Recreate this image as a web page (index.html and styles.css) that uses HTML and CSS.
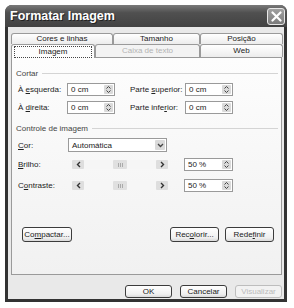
FILE: index.html
```html
<!DOCTYPE html>
<html lang="pt">
<head>
    <meta charset="UTF-8">
    <title>Formatar Imagem</title>
    <link rel="stylesheet" href="styles.css">
</head>
<body>

    <div class="window">
        <div class="titlebar">
            <span class="title">Formatar Imagem</span>
            <div class="close">
                <svg width="11" height="11" viewBox="0 0 11 11"><path d="M1.5 1.5 L9.5 9.5 M9.5 1.5 L1.5 9.5" stroke="#fff" stroke-width="2.2" stroke-linecap="round"/></svg>
            </div>
        </div>

        <div class="client">
            <div class="tabs">
                <div class="tab-row back">
                    <div class="tab w1">Cores e linhas</div>
                    <div class="tab w2">Tamanho</div>
                    <div class="tab w3">Posição</div>
                </div>
                <div class="tab-row front">
                    <div class="tab active"><span class="focus">Imagem</span></div>
                    <div class="tab w5 disabled">Caixa de texto</div>
                    <div class="tab w3">Web</div>
                </div>
            </div>

            <div class="panel">
                <div class="group">Cortar</div>

                <div class="crop-row">
                    <span class="lbl">À <u>e</u>squerda:</span>
                    <div class="spin"><span>0 cm</span><div class="spin-btn"><svg width="5" height="9" viewBox="0 0 5 9"><path d="M0.5 3.5 L2.5 1.5 L4.5 3.5 M0.5 5.5 L2.5 7.5 L4.5 5.5" stroke="#444" fill="none"/></svg></div></div>
                    <span class="lbl lbl2">Parte <u>s</u>uperior:</span>
                    <div class="spin"><span>0 cm</span><div class="spin-btn"><svg width="5" height="9" viewBox="0 0 5 9"><path d="M0.5 3.5 L2.5 1.5 L4.5 3.5 M0.5 5.5 L2.5 7.5 L4.5 5.5" stroke="#444" fill="none"/></svg></div></div>
                </div>
                <div class="crop-row">
                    <span class="lbl">À <u>d</u>ireita:</span>
                    <div class="spin"><span>0 cm</span><div class="spin-btn"><svg width="5" height="9" viewBox="0 0 5 9"><path d="M0.5 3.5 L2.5 1.5 L4.5 3.5 M0.5 5.5 L2.5 7.5 L4.5 5.5" stroke="#444" fill="none"/></svg></div></div>
                    <span class="lbl lbl2">Parte infe<u>r</u>ior:</span>
                    <div class="spin"><span>0 cm</span><div class="spin-btn"><svg width="5" height="9" viewBox="0 0 5 9"><path d="M0.5 3.5 L2.5 1.5 L4.5 3.5 M0.5 5.5 L2.5 7.5 L4.5 5.5" stroke="#444" fill="none"/></svg></div></div>
                </div>

                <div class="group group2">Controle de imagem</div>

                <div class="cor-row">
                    <span class="lbl">
<u>C</u>or:</span>
                    <div class="select"><span>Automática</span><div class="select-btn"><svg width="7" height="5" viewBox="0 0 7 5"><path d="M1 1 L3.5 3.5 L6 1" stroke="#444" stroke-width="1.3" fill="none"/></svg></div></div>
                </div>

                <div class="slider-row">
                    <span class="lbl wide"><u>B</u>rilho:</span>
                    <div class="scroll">
                        <div class="sb-btn"><svg width="5" height="7" viewBox="0 0 5 7"><path d="M4 1 L1.5 3.5 L4 6" stroke="#333" stroke-width="1.4" fill="none"/></svg></div>
                        <div class="sb-gap"></div>
                        <div class="sb-thumb"><i></i><i></i><i></i></div>
                        <div class="sb-fill"></div>
                        <div class="sb-btn"><svg width="5" height="7" viewBox="0 0 5 7"><path d="M1 1 L3.5 3.5 L1 6" stroke="#333" stroke-width="1.4" fill="none"/></svg></div>
                    </div>
                    <div class="spin pct"><span>50 %</span><div class="spin-btn"><svg width="5" height="9" viewBox="0 0 5 9"><path d="M0.5 3.5 L2.5 1.5 L4.5 3.5 M0.5 5.5 L2.5 7.5 L4.5 5.5" stroke="#444" fill="none"/></svg></div></div>
                </div>
                <div class="slider-row second">
                    <span class="lbl wide">C<u>o</u>ntraste:</span>
                    <div class="scroll">
                        <div class="sb-btn"><svg width="5" height="7" viewBox="0 0 5 7"><path d="M4 1 L1.5 3.5 L4 6" stroke="#333" stroke-width="1.4" fill="none"/></svg></div>
                        <div class="sb-gap"></div>
                        <div class="sb-thumb"><i></i><i></i><i></i></div>
                        <div class="sb-fill"></div>
                        <div class="sb-btn"><svg width="5" height="7" viewBox="0 0 5 7"><path d="M1 1 L3.5 3.5 L1 6" stroke="#333" stroke-width="1.4" fill="none"/></svg></div>
                    </div>
                    <div class="spin pct"><span>50 %</span><div class="spin-btn"><svg width="5" height="9" viewBox="0 0 5 9"><path d="M0.5 3.5 L2.5 1.5 L4.5 3.5 M0.5 5.5 L2.5 7.5 L4.5 5.5" stroke="#444" fill="none"/></svg></div></div>
                </div>

                <div class="panel-buttons">
                    <div class="btn">Co<u>m</u>pactar...</div>
                    <div class="btn push">Rec<u>o</u>lorir...</div>
                    <div class="btn">Rede<u>f</u>inir</div>
                </div>
            </div>

            <div class="dialog-buttons">
                <div class="btn small">OK</div>
                <div class="btn small">Cancelar</div>
                <div class="btn small disabled">Visualizar</div>
            </div>
        </div>
    </div>

</body>
</html>
```

FILE: styles.css
```css
* {
    box-sizing: border-box;
}
body {
    margin: 0;
    background: #fff;
    font-family: 'Liberation Sans', Arial, sans-serif;
    font-size: 8px;
    color: #222;
}
u {
    text-decoration: underline;
    text-underline-offset: 1px;
}
.window {
    margin: 5px 0 0 5px;
    width: 282px;
    height: 297px;
    background: #333;
    border-radius: 7px 7px 0 0;
    display: flex;
    flex-direction: column;
}
.titlebar {
    height: 22px;
    flex: none;
    display: flex;
    align-items: center;
    justify-content: space-between;
    padding: 0 2px 0 5px;
    background: linear-gradient(#7a7a7a, #505050 35%, #424242);
    border-radius: 7px 7px 0 0;
}
.title {
    color: #fff;
    font-weight: bold;
    font-size: 12.5px;
    text-shadow: 1px 1px 0 #222;
}
.close {
    width: 18px;
    height: 17px;
    border: 1px solid #e8e8e8;
    border-radius: 3px;
    background: linear-gradient(#a0a0a0, #7c7c7c);
    display: flex;
    align-items: center;
    justify-content: center;
}
.client {
    flex: 1;
    margin: 0 3px 3px;
    background: #e9e9e9;
    padding: 6px 2px 0 3px;
    display: flex;
    flex-direction: column;
}

/* Tabs */
.tab-row {
    display: flex;
    margin-right: -1px;
}
.tab {
    text-align: center;
    border: 1px solid #9a9a9a;
    border-bottom: none;
    border-radius: 3px 3px 0 0;
    background: linear-gradient(#fff, #ececec);
    white-space: nowrap;
}
.back .tab {
    height: 11px;
    line-height: 10px;
}
.front .tab {
    height: 13px;
    line-height: 12px;
}
.w1 { width: 102px; }
.w2 { width: 87px; }
.w3 { width: 83px; }
.w5 { width: 105px; }
.tab.active {
    width: 84px;
    height: 14px;
    margin-bottom: -1px;
    padding: 1px 2px 0;
    background: #fdfdfd;
    position: relative;
}
.focus {
    display: block;
    height: 12px;
    line-height: 10px;
    border: 1px dotted #444;
}
.tab.disabled {
    color: #b4b4b4;
    background: #f3f3f3;
}

/* Panel */
.panel {
    height: 218px;
    flex: none;
    border: 1px solid #9a9a9a;
    background: linear-gradient(#fdfdfd, #f1f1f1);
    padding: 10px 3px 0 4px;
    display: flex;
    flex-direction: column;
}
.group {
    display: flex;
    align-items: center;
    height: 10px;
    color: #444;
}
.group::after {
    content: "";
    flex: 1;
    height: 1px;
    background: #d4d4d4;
    margin-left: 4px;
}
.group2 {
    margin-top: 9px;
}
.lbl {
    width: 49px;
    flex: none;
    white-space: nowrap;
}
.lbl2 {
    width: 55px;
    margin-left: 15px;
}
.lbl.wide {
    width: 54px;
}
.crop-row, .cor-row, .slider-row {
    display: flex;
    align-items: center;
    padding-left: 2px;
}
.crop-row {
    height: 13px;
    margin-top: 5px;
}
.cor-row {
    height: 14px;
    margin-top: 5px;
}
.cor-row .lbl {
    width: 50px;
}
.slider-row {
    height: 13px;
    margin-top: 6px;
}
.slider-row.second {
    margin-top: 8px;
}

/* Inputs */
.spin {
    width: 48px;
    height: 100%;
    border: 1px solid #9a9a9a;
    background: #fff;
    display: flex;
    align-items: center;
    justify-content: space-between;
    padding: 1px 1px 1px 3px;
}
.spin.pct {
    width: 49px;
    margin-left: 16px;
}
.spin-btn {
    width: 9px;
    height: 100%;
    background: #dadada;
    border-radius: 1px;
    display: flex;
    align-items: center;
    justify-content: center;
}
.select {
    width: 99px;
    height: 100%;
    border: 1px solid #9a9a9a;
    background: #fff;
    display: flex;
    align-items: center;
    justify-content: space-between;
    padding: 1px 1px 1px 3px;
}
.select-btn {
    width: 10px;
    height: 100%;
    background: #dadada;
    border-radius: 1px;
    display: flex;
    align-items: center;
    justify-content: center;
}
.scroll {
    width: 96px;
    height: 9px;
    display: flex;
    background: #f6f6f6;
}
.sb-btn {
    width: 12px;
    background: #dedede;
    border-radius: 1px;
    display: flex;
    align-items: center;
    justify-content: center;
}
.sb-gap {
    width: 29px;
}
.sb-thumb {
    width: 14px;
    background: #e0e0e0;
    border-radius: 1px;
    display: flex;
    align-items: center;
    justify-content: center;
    gap: 1px;
}
.sb-thumb i {
    width: 1px;
    height: 4px;
    background: #aaa;
}
.sb-fill {
    flex: 1;
}

/* Buttons */
.btn {
    height: 15px;
    width: 49px;
    border: 1px solid #3c3c3c;
    border-radius: 3px;
    background: linear-gradient(#fff, #efefef 75%, #d9d9d9);
    display: flex;
    align-items: center;
    justify-content: center;
    white-space: nowrap;
}
.panel-buttons {
    display: flex;
    gap: 6px;
    margin-top: 35px;
    padding: 0 4px 0 6px;
}
.panel-buttons .btn:first-child {
    width: 50px;
}
.btn.push {
    margin-left: auto;
}
.dialog-buttons {
    display: flex;
    justify-content: flex-end;
    gap: 8px;
    margin-top: 10px;
}
.btn.small {
    height: 13px;
    width: 47px;
}
.btn.disabled {
    border-color: #bdbdbd;
    color: #bbb;
    background: #f2f2f2;
}
```
